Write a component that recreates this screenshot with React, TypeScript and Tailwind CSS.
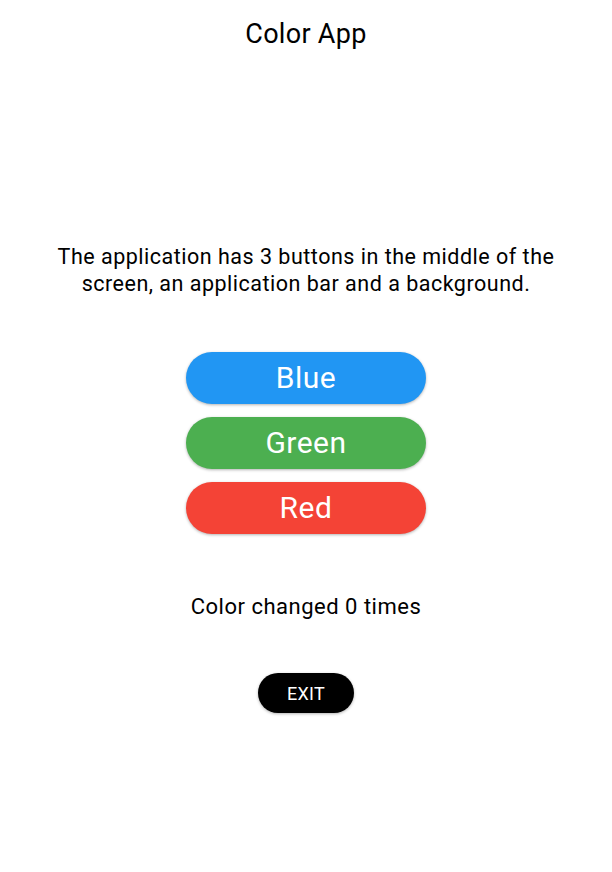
export default function App() {
  const font = { fontFamily: "Roboto, 'Liberation Sans', sans-serif" };
  return (
    <div className="w-[612px] h-[872px] bg-white flex flex-col items-center text-black" style={font}>
      <div className="h-[68px] w-full flex items-center justify-center text-[27px] tracking-[0.3px]">Color App</div>
      <p className="mt-[175px] w-[520px] text-center text-[21.5px] leading-[27px] tracking-[0.5px]">
        The application has 3 buttons in the middle of the screen, an application bar and a background.
      </p>
      <div className="mt-[55px] flex flex-col gap-[13px]">
        <button className="w-[240px] h-[52px] rounded-full bg-[#2196F3] text-white text-[30px] leading-[50px] tracking-[0.5px] shadow-[0_1px_3px_rgba(0,0,0,0.3)]">Blue</button>
        <button className="w-[240px] h-[52px] rounded-full bg-[#4CAF50] text-white text-[30px] leading-[50px] tracking-[0.5px] shadow-[0_1px_3px_rgba(0,0,0,0.3)]">Green</button>
        <button className="w-[240px] h-[52px] rounded-full bg-[#F44336] text-white text-[30px] leading-[50px] tracking-[0.5px] shadow-[0_1px_3px_rgba(0,0,0,0.3)]">Red</button>
      </div>
      <div className="mt-[58px] text-[22px] leading-[29px] tracking-[0.5px]">Color changed 0 times</div>
      <button className="mt-[52px] w-[96px] h-[40px] rounded-full bg-black text-white text-[18px] tracking-[0.3px] shadow-[0_1px_3px_rgba(0,0,0,0.3)]">EXIT</button>
    </div>
  );
}
